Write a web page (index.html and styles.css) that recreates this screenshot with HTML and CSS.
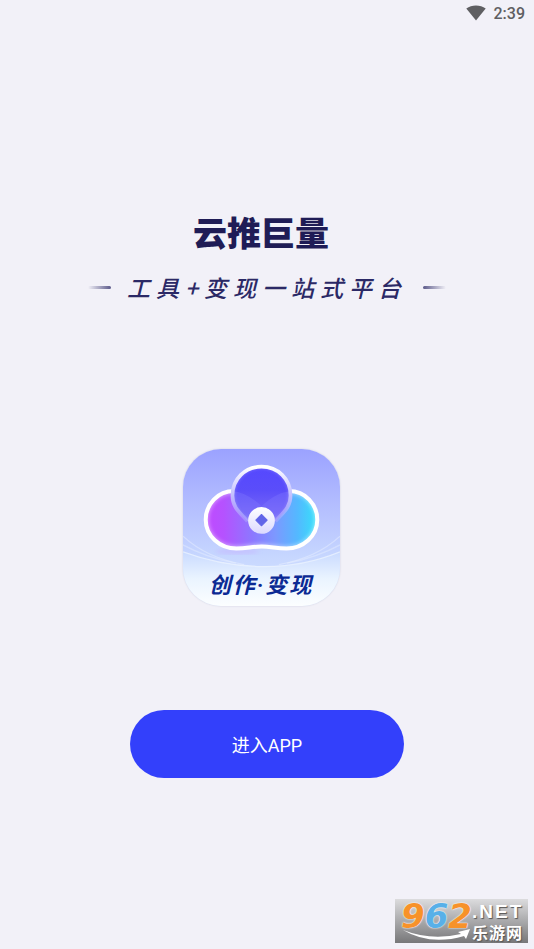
FILE: index.html
```
<!DOCTYPE html>
<html lang="zh-CN">
<head>
    <meta charset="UTF-8">
    <meta name="viewport" content="width=device-width, initial-scale=1">
    <title>云推巨量</title>
    <link rel="stylesheet" href="styles.css">
</head>
<body>
    <header class="status-bar">
        <svg class="wifi" viewBox="0 0 20 16" aria-hidden="true">
            <path d="M10 15.500L.3 3.600Q4.500.4 10 .4T19.700 3.600Z" fill="#5f5f62"/>
        </svg>
        <time>2:39</time>
    </header>

    <main class="splash">
        <h1>云推巨量</h1>
        <div class="slogan">
            <span class="dash"></span>
            <p>工具+变现一站式平台</p>
            <span class="dash right"></span>
        </div>

        <div class="app-icon">
            <svg class="art" viewBox="22 28 470 470" aria-hidden="true">
                <defs>
                    <linearGradient id="sky" x1="0" y1="0" x2="0" y2="1">
                        <stop offset="0" stop-color="#9ba2ff"/>
                        <stop offset=".35" stop-color="#b3bdff"/>
                        <stop offset=".68" stop-color="#c6d6ff"/>
                        <stop offset="1" stop-color="#dcebff"/>
                    </linearGradient>
                    <linearGradient id="ground" x1="0" y1="0" x2="0" y2="1">
                        <stop offset="0" stop-color="#c9daff"/>
                        <stop offset=".5" stop-color="#eaf4ff"/>
                        <stop offset="1" stop-color="#fcfeff"/>
                    </linearGradient>
                    <linearGradient id="cloud" gradientUnits="userSpaceOnUse" x1="90" y1="0" x2="424" y2="0">
                        <stop offset="0" stop-color="#c04aff"/>
                        <stop offset=".16" stop-color="#b552ff"/>
                        <stop offset=".42" stop-color="#8c78ff"/>
                        <stop offset=".62" stop-color="#7d98ff"/>
                        <stop offset=".82" stop-color="#54b8ff"/>
                        <stop offset="1" stop-color="#35e2fa"/>
                    </linearGradient>
                    <linearGradient id="drop" x1="0" y1="0" x2="0" y2="1">
                        <stop offset="0" stop-color="#5548ff"/>
                        <stop offset=".35" stop-color="#5a4dfa"/>
                        <stop offset=".7" stop-color="#7566f6"/>
                        <stop offset="1" stop-color="#a39bff"/>
                    </linearGradient>
                    <linearGradient id="rim" x1="0" y1="0" x2="0" y2="1">
                        <stop offset="0" stop-color="#fff"/>
                        <stop offset=".5" stop-color="#c5c2ff"/>
                        <stop offset="1" stop-color="#b9b1ff" stop-opacity=".4"/>
                    </linearGradient>
                    <linearGradient id="coin" x1="0" y1="0" x2="0" y2="1">
                        <stop offset="0" stop-color="#fff"/>
                        <stop offset="1" stop-color="#dcd9ff"/>
                    </linearGradient>
                    <filter id="soft" x="-20%" y="-20%" width="140%" height="140%">
                        <feGaussianBlur stdDeviation="7"/>
                    </filter>
                    <clipPath id="cloud-clip">
                        <path d="M175 154C126 154 90 193 90 240C90 289 132 326 182 326C214 326 228 320 257 320S300 326 332 326C382 326 424 289 424 240C424 193 388 154 339 154Z"/>
                    </clipPath>
                    <clipPath id="drop-clip">
                        <path d="M257 81C306 81 344 118 344 167C344 202 324 216 299 244L257 278L215 244C190 216 170 202 170 167C170 118 208 81 257 81Z"/>
                    </clipPath>
                </defs>
                <rect x="22" y="28" width="470" height="470" fill="url(#sky)"/>
                <path d="M22 336Q135 378 257 380T492 336V498H22Z" fill="url(#ground)"/>
                <g fill="none" stroke="#f0f6ff" stroke-width="4">
                    <path d="M22 336Q135 378 257 380T492 336" opacity=".7"/>
                    <path d="M22 289Q92 354 205 374" opacity=".4"/>
                    <path d="M492 289Q422 354 309 374" opacity=".4"/>
                    <path d="M22 315Q90 352 180 370" opacity=".35"/>
                    <path d="M492 315Q424 352 334 370" opacity=".35"/>
                </g>
                <ellipse cx="185" cy="335" rx="65" ry="7" fill="#c6a9ff" opacity=".5" filter="url(#soft)"/>

                <!-- cloud body -->
                <path d="M175 154C126 154 90 193 90 240C90 289 132 326 182 326C214 326 228 320 257 320S300 326 332 326C382 326 424 289 424 240C424 193 388 154 339 154Z" fill="url(#cloud)"/>
                <g clip-path="url(#cloud-clip)">
                    <path d="M175 154C126 154 90 193 90 240C90 289 132 326 182 326C214 326 228 320 257 320S300 326 332 326C382 326 424 289 424 240C424 193 388 154 339 154" fill="none" stroke="#fff" stroke-width="15" opacity=".5" filter="url(#soft)"/>
                </g>
                <path d="M175 154C126 154 90 193 90 240C90 289 132 326 182 326C214 326 228 320 257 320S300 326 332 326C382 326 424 289 424 240C424 193 388 154 339 154" fill="none" stroke="#fff" stroke-width="12"/>

                <!-- top drop -->
                <path d="M257 81C306 81 344 118 344 167C344 202 324 216 299 244L257 278L215 244C190 216 170 202 170 167C170 118 208 81 257 81Z" fill="url(#drop)"/>
                <g clip-path="url(#drop-clip)">
                    <path d="M170 155Q210 155 257 199Q304 155 344 155V280H170Z" fill="#8079ff" opacity=".35"/>
                    <circle cx="257" cy="167" r="91" fill="none" stroke="#d5cfff" stroke-width="12" opacity=".6" filter="url(#soft)"/>
                </g>
                <path d="M215 244C190 216 170 202 170 167C170 118 208 81 257 81S344 118 344 167C344 202 324 216 299 244" fill="none" stroke="url(#rim)" stroke-width="11"/>

                <circle cx="257" cy="242" r="40" fill="url(#coin)"/>
                <path d="M257 224L274 241L257 258L240 241Z" fill="#6265e8" stroke="#6265e8" stroke-width="3" stroke-linejoin="round"/>
            </svg>
            <span class="icon-label">创作·变现</span>
        </div>

        <button class="enter" type="button">进入APP</button>
    </main>

    <aside class="watermark">
        <div class="digits"><span>9</span><span class="blue">6</span><span>2</span></div>
        <div class="site">
            <span class="net">.NET</span>
            <span class="site-name">乐游网</span>
        </div>
        <svg class="swoosh" viewBox="0 0 68 13" aria-hidden="true">
            <path d="M0 1Q28 12 58 5L55 3L67 0L63 10L61 7Q27 17 0 1Z" fill="#fff"/>
        </svg>
    </aside>
</body>
</html>
```
FILE: styles.css
```
* {
    box-sizing: border-box;
}

body {
    position: relative;
    display: flex;
    flex-direction: column;
    min-height: 100vh;
    margin: 0;
    background-color: #f2f1f8;
    font-family: Roboto, "Noto Sans CJK SC", sans-serif;
}

h1,
p {
    margin: 0;
}

.status-bar {
    display: flex;
    justify-content: flex-end;
    align-items: center;
    gap: 8px;
    height: 26px;
    padding: 0 9px;
    color: #5f5f62;
    font-size: 16px;
    font-weight: 500;
}

.wifi {
    width: 20px;
    height: 16px;
}

.splash {
    display: flex;
    flex-direction: column;
    align-items: center;
    padding-top: 182px;
}

h1 {
    padding-right: 12px;
    color: #1f1c56;
    font-family: "Noto Sans CJK SC", sans-serif;
    font-size: 34px;
    font-weight: 900;
    line-height: 48px;
}

.slogan {
    display: flex;
    align-items: center;
    gap: 16px;
    margin-top: 11px;
    color: #2b2966;
    font-family: "Noto Sans CJK SC", sans-serif;
    font-size: 23px;
    font-style: italic;
    font-weight: 500;
    line-height: 40px;
    letter-spacing: 6px;
}

.dash {
    width: 23px;
    height: 3px;
    border-radius: 2px;
    background: linear-gradient(to right, transparent, #5c5a8a);
}

.dash.right {
    background: linear-gradient(to left, transparent, #5c5a8a);
}

.app-icon {
    position: relative;
    display: flex;
    justify-content: center;
    align-items: flex-end;
    width: 157px;
    height: 157px;
    margin: 142px 12px 0 0;
    padding-bottom: 4px;
    border-radius: 38px;
    box-shadow: 0 0 2px #c8cbdc;
    overflow: hidden;
}

.art {
    position: absolute;
    inset: 0;
    width: 100%;
    height: 100%;
}

.icon-label {
    position: relative;
    color: #0b2a94;
    font-family: Roboto, "Noto Sans CJK SC", sans-serif;
    font-size: 22px;
    font-style: italic;
    font-weight: 700;
    line-height: 32px;
    letter-spacing: 2px;
}

.enter {
    width: 274px;
    height: 68px;
    margin-top: 104px;
    border: none;
    border-radius: 34px;
    background-color: #3340fb;
    color: #fff;
    font-family: inherit;
    font-size: 18px;
    cursor: pointer;
}

.watermark {
    position: absolute;
    right: 6px;
    bottom: 6px;
    display: flex;
    width: 133px;
    height: 44px;
    padding-left: 6px;
    background: linear-gradient(#dcdcde, #777779);
}

.digits {
    color: #f7922a;
    font: italic 700 34px/34px "DejaVu Sans", sans-serif;
    text-shadow: 0 0 2px #fff, 0 0 1px #fff;
}

.digits .blue {
    color: #58b0e8;
}

.site {
    display: flex;
    flex-direction: column;
    padding-top: 4px;
    color: #fff;
    font-weight: 700;
    text-shadow: 1px 1px 1px #555;
}

.net {
    font-family: "Liberation Sans", sans-serif;
    font-size: 19px;
    line-height: 18px;
    letter-spacing: 2px;
}

.site-name {
    font-family: "Noto Sans CJK SC", sans-serif;
    font-size: 16px;
    line-height: 22px;
    letter-spacing: 1px;
}

.swoosh {
    position: absolute;
    left: 8px;
    bottom: 1px;
    width: 68px;
    height: 13px;
}
```
